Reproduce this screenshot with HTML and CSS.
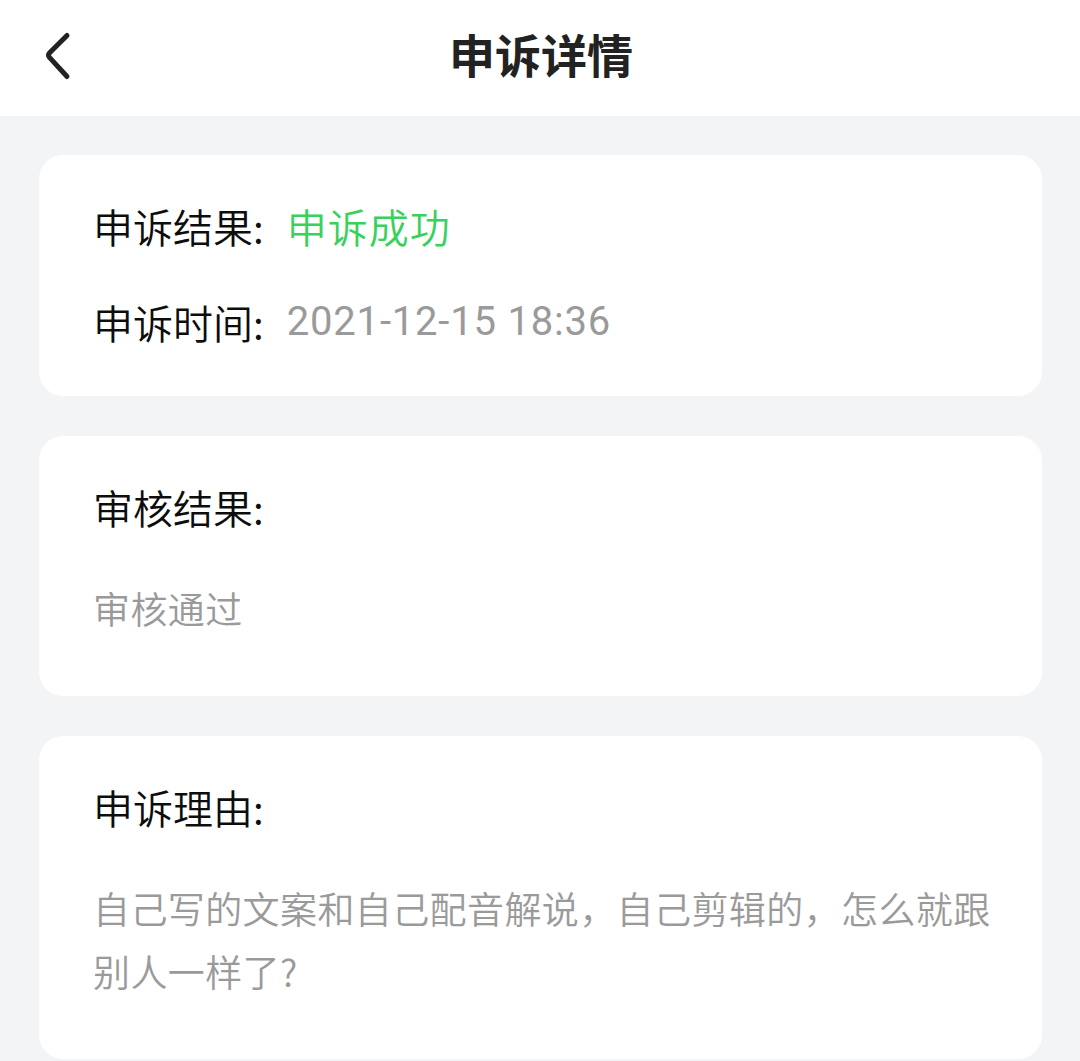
FILE: index.html
```html
<!DOCTYPE html>
<html lang="zh-CN">
<head>
<meta charset="utf-8">
<title>申诉详情</title>
<link rel="stylesheet" href="styles.css">
</head>
<body>
<header class="nav">
  <span class="back" aria-label="返回">
    <svg width="40" height="60" viewBox="0 0 40 60">
      <path d="M29 10.5 L11.2 28.3 Q9.8 30.2 11.2 32.1 L29 51.5" fill="none" stroke="#222" stroke-width="5" stroke-linecap="round" stroke-linejoin="round"/>
    </svg>
  </span>
  <h1 class="title">申诉详情</h1>
</header>
<main class="content">
  <section class="card">
    <div class="row"><span class="label">申诉结果:</span><span class="value success">申诉成功</span></div>
    <div class="row row-gap"><span class="label">申诉时间:</span><span class="value date">2021-12-15 18:36</span></div>
  </section>
  <section class="card card-text">
    <div class="row"><span class="label">审核结果:</span></div>
    <p class="text">审核通过</p>
  </section>
  <section class="card card-text">
    <div class="row"><span class="label">申诉理由:</span></div>
    <p class="text">自己写的文案和自己配音解说，自己剪辑的，怎么就跟别人一样了?</p>
  </section>
</main>
</body>
</html>
```
FILE: styles.css
```css
* { box-sizing: border-box; }
html, body { margin: 0; padding: 0; }
body {
  width: 1080px;
  min-height: 1061px;
  background: #f3f4f6;
  font-family: "Noto Sans CJK SC", "Noto Sans", sans-serif;
  color: #111;
}
.nav {
  height: 116px;
  background: #fff;
  display: flex;
  align-items: center;
  justify-content: center;
  position: relative;
}
.back {
  position: absolute;
  left: 38px;
  top: 25px;
  width: 40px;
  height: 60px;
  display: block;
}
.back svg { display: block; }
.title {
  margin: 0 0 10px 0;
  font-size: 46px;
  font-weight: 700;
  color: #222;
  line-height: 60px;
  padding-left: 2px;
}
.content {
  padding: 39px 38px 0 39px;
  display: flex;
  flex-direction: column;
  gap: 40px;
}
.card {
  background: #fff;
  border-radius: 24px;
  padding: 43px 46px 46px 54px;
}
.card-text { padding-bottom: 56px; }
.row {
  display: flex;
  align-items: center;
  height: 56px;
  line-height: 56px;
}
.row-gap { margin-top: 40px; }
.label {
  font-size: 40px;
  font-weight: 350;
  color: #0d0d0d;
}
.value { margin-left: 23px; font-size: 40px; font-weight: 350; }
.success { color: #38d15c; letter-spacing: 1px; }
.date {
  font-family: Roboto, "Noto Sans", sans-serif;
  color: #9a9a9a;
  font-size: 40px;
  font-weight: 400;
  letter-spacing: 0.8px;
}
.text {
  margin: 42px 0 0 0;
  font-size: 37px;
  font-weight: 350;
  letter-spacing: 0.4px;
  line-height: 63px;
  color: #9a9a9a;
}
```
